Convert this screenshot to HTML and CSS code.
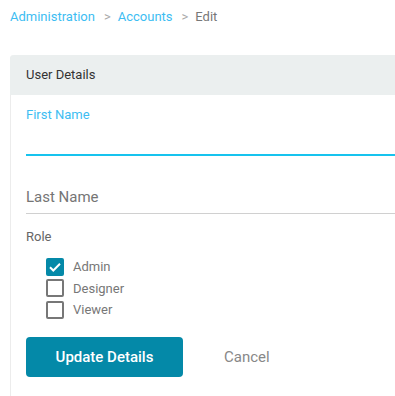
FILE: index.html
```html
<!DOCTYPE html>
<html lang="en">
<head>
    <meta charset="UTF-8">
    <meta name="viewport" content="width=device-width, initial-scale=1.0">
    <title>Edit Account</title>
    <link rel="stylesheet" href="styles.css">
</head>
<body>
    <nav class="breadcrumb">
        <a href="#">Administration</a>
        <span class="sep">&gt;</span>
        <a href="#">Accounts</a>
        <span class="sep">&gt;</span>
        <span class="current">Edit</span>
    </nav>

    <div class="card">
        <div class="card-header">User Details</div>
        <div class="card-body">
            <div class="field active">
                <label class="field-label">First Name</label>
                <input type="text">
            </div>
            <div class="field">
                <input type="text" placeholder="Last Name">
            </div>

            <div class="role-label">Role</div>
            <div class="roles">
                <label class="check">
                    <span class="box checked">
                        <svg viewBox="0 0 18 18" width="18" height="18"><path d="M4 9.2l3.3 3.3L14 5.8" fill="none" stroke="#fff" stroke-width="2"/></svg>
                    </span>
                    Admin
                </label>
                <label class="check"><span class="box"></span>Designer</label>
                <label class="check"><span class="box"></span>Viewer</label>
            </div>

            <div class="actions">
                <button class="primary">Update Details</button>
                <button class="link">Cancel</button>
            </div>
        </div>
    </div>
</body>
</html>
```

FILE: styles.css
```css
:root {
    --blue: #3dbdf2;
    --cyan: #17c3ee;
    --teal: #0489a8;
    --grey: #777;
}

html {
    overflow: hidden;
}

body {
    font-family: Roboto, 'Liberation Sans', sans-serif;
    margin: 0;
    padding: 9px 0 0 10px;
    color: #333;
    background: #fff;
}

.breadcrumb {
    font-size: 13px;
    line-height: 16px;
    display: flex;
    align-items: center;
}

.breadcrumb a {
    color: var(--blue);
    text-decoration: none;
}

.breadcrumb .sep {
    color: #aaa;
    margin: 0 7px 0 9px;
}

.breadcrumb .current {
    color: var(--grey);
}

/* card runs off the right and bottom edges of the window */
.card {
    margin-top: 30px;
    border-left: 1px solid #ececec;
    border-radius: 4px 0 0 0;
    height: 341px;
    box-sizing: border-box;
}

.card-header {
    background: #ebefef;
    height: 40px;
    line-height: 40px;
    font-size: 13px;
    color: #333;
    border-radius: 4px 0 0 0;
    margin-left: -1px;
    padding-left: 16px;
}

.card-body {
    padding: 12px 0 0 15px;
}

.field-label {
    display: block;
    font-size: 13px;
    line-height: 16px;
    color: var(--blue);
}

.field input {
    display: block;
    width: 100%;
    box-sizing: border-box;
    border: none;
    border-bottom: 1px solid #d0d0d0;
    height: 34px;
    padding: 0;
    font-family: inherit;
    font-size: 15px;
    outline: none;
}

.field.active input {
    border-bottom: 2px solid var(--cyan);
    height: 33px;
}

.field input::placeholder {
    color: #757575;
}

.field + .field {
    margin-top: 24px;
}

.role-label {
    margin-top: 15px;
    font-size: 13px;
    line-height: 16px;
    color: #666;
}

.roles {
    margin-top: 11px;
    padding-left: 20px;
}

.check {
    display: flex;
    align-items: center;
    height: 21.5px;
    font-size: 13px;
    color: var(--grey);
}

.box {
    width: 18px;
    height: 18px;
    box-sizing: border-box;
    border: 2px solid #777;
    border-radius: 2px;
    margin-right: 9px;
    display: flex;
}

.box.checked {
    background: var(--teal);
    border-color: var(--teal);
}

.box svg {
    margin: -2px;
}

.actions {
    margin-top: 16px;
    display: flex;
    align-items: center;
}

button {
    font-family: inherit;
    font-size: 15px;
    border: none;
    cursor: pointer;
}

.primary {
    background: var(--teal);
    color: #fff;
    width: 157px;
    height: 40px;
    border-radius: 4px;
    font-weight: 500;
}

.link {
    background: none;
    color: #888;
    margin-left: 41px;
    padding: 0;
}
```
